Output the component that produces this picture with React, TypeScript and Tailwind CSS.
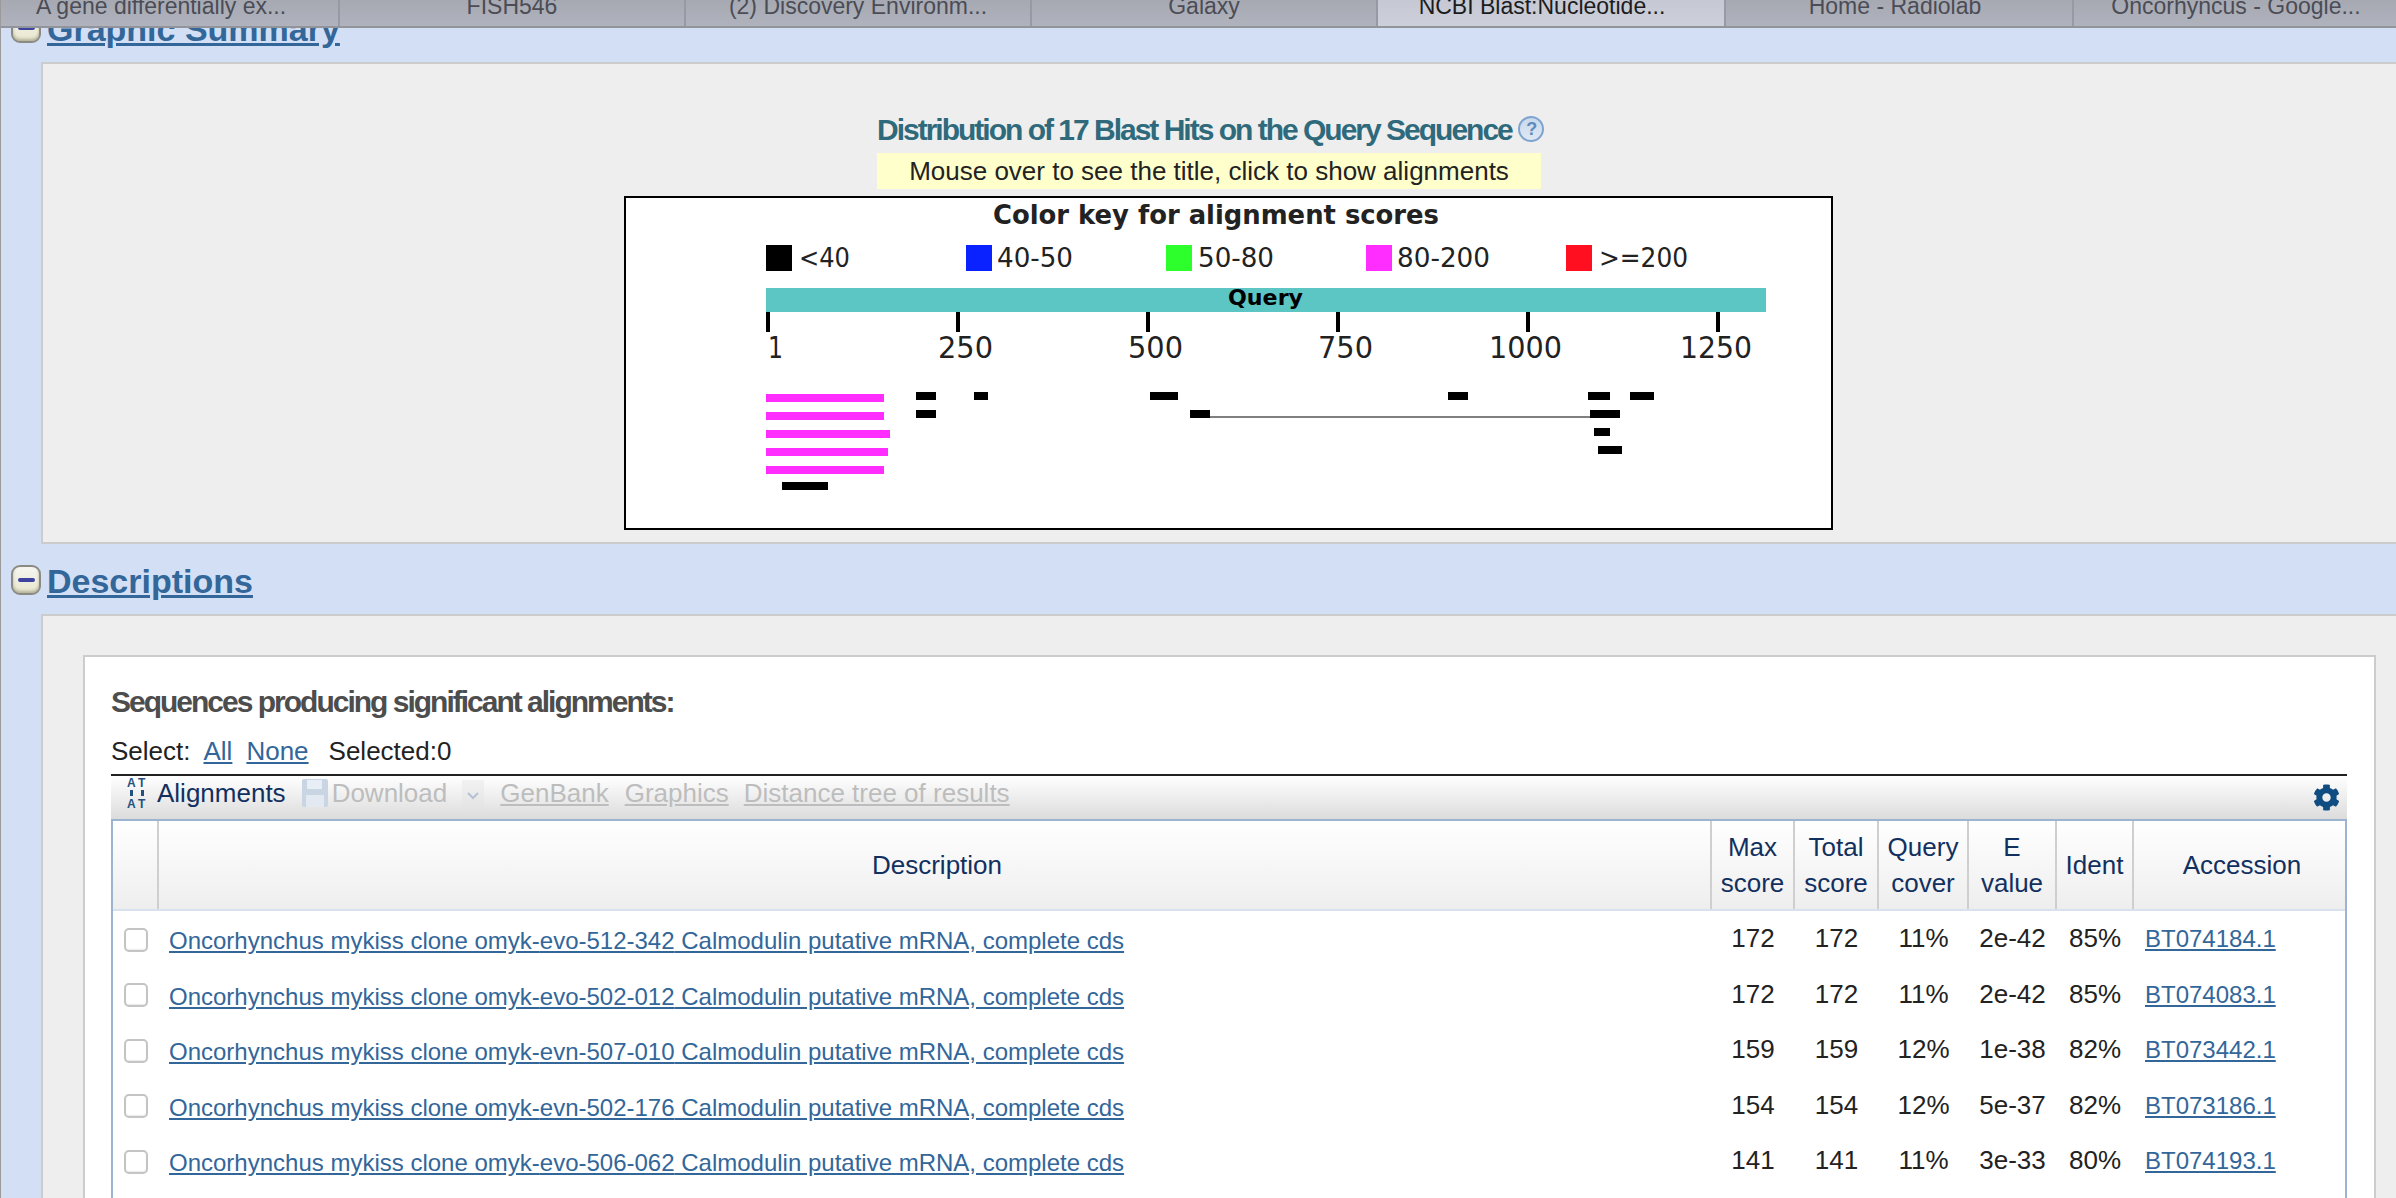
import { FaCog } from "react-icons/fa";

const tabs = [
  { label: "A gene differentially ex...", width: "w-[356px]", text: "" },
  { label: "FISH546", width: "w-[346px]", text: "" },
  { label: "(2) Discovery Environm...", width: "w-[346px]", text: "" },
  { label: "Galaxy", width: "w-[346px]", text: "" },
  { label: "NCBI Blast:Nucleotide...", width: "w-[348px]", text: "pr-[18px]", active: true },
  { label: "Home - Radiolab", width: "w-[348px]", text: "pr-[8px]" },
  { label: "Oncorhyncus - Google...", width: "w-[334px]", text: "pr-[8px]" },
];

const rows = [
  { clone: "evo-512-342", score: "172", cover: "11%", e: "2e-42", ident: "85%", acc: "BT074184.1" },
  { clone: "evo-502-012", score: "172", cover: "11%", e: "2e-42", ident: "85%", acc: "BT074083.1" },
  { clone: "evn-507-010", score: "159", cover: "12%", e: "1e-38", ident: "82%", acc: "BT073442.1" },
  { clone: "evn-502-176", score: "154", cover: "12%", e: "5e-37", ident: "82%", acc: "BT073186.1" },
  { clone: "evo-506-062", score: "141", cover: "11%", e: "3e-33", ident: "80%", acc: "BT074193.1" },
];

const columns = "grid grid-cols-[44px_1553px_83px_84px_90px_88px_77px_1fr]";

const legend = [
  { x: 766, w: 26, fill: "#000000", label: "<40", tx: 799, tw: 51 },
  { x: 966, w: 26, fill: "#0a22ff", label: "40-50", tx: 997, tw: 76 },
  { x: 1166, w: 26, fill: "#2dff2d", label: "50-80", tx: 1198, tw: 76 },
  { x: 1366, w: 26, fill: "#ff2dff", label: "80-200", tx: 1397, tw: 93 },
  { x: 1566, w: 26, fill: "#ff0f1f", label: ">=200", tx: 1599, tw: 89 },
];

const ticks = [
  { x: 766, label: "1", tx: 768, tw: 15 },
  { x: 956, label: "250", tx: 938, tw: 55 },
  { x: 1146, label: "500", tx: 1128, tw: 55 },
  { x: 1336, label: "750", tx: 1318, tw: 55 },
  { x: 1526, label: "1000", tx: 1489, tw: 73 },
  { x: 1716, label: "1250", tx: 1680, tw: 72 },
];

// x1, x2, y of each hit on the graphic
const magentaHits = [
  [766, 884, 394],
  [766, 884, 412],
  [766, 890, 430],
  [766, 888, 448],
  [766, 884, 466],
];
const blackHits = [
  [782, 828, 482],
  [916, 936, 392],
  [916, 936, 410],
  [974, 988, 392],
  [1150, 1178, 392],
  [1190, 1210, 410],
  [1448, 1468, 392],
  [1588, 1610, 392],
  [1630, 1654, 392],
  [1590, 1620, 410],
  [1594, 1610, 428],
  [1598, 1622, 446],
];

const chartFont = "'DejaVu Sans', sans-serif";

function HitsChart() {
  return (
    <svg viewBox="626 198 1205 330" className="block w-[1205px] h-[330px]">
      <text x={993} y={224} fontFamily={chartFont} fontWeight="700" fontSize={26} fill="#222" textLength={446} lengthAdjust="spacingAndGlyphs">
        Color key for alignment scores
      </text>
      {legend.map((item) => (
        <g key={item.label}>
          <rect x={item.x} y={245} width={item.w} height={26} fill={item.fill} />
          <text x={item.tx} y={267} fontFamily={chartFont} fontSize={27} fill="#222" textLength={item.tw} lengthAdjust="spacingAndGlyphs">
            {item.label}
          </text>
        </g>
      ))}
      <rect x={766} y={288} width={1000} height={24} fill="#5cc6c4" />
      <text x={1228} y={305} fontFamily={chartFont} fontWeight="700" fontSize={21} fill="#000" textLength={75} lengthAdjust="spacingAndGlyphs">
        Query
      </text>
      {ticks.map((tick) => (
        <g key={tick.label}>
          <rect x={tick.x} y={312} width={4} height={20} fill="#000" />
          <text x={tick.tx} y={358} fontFamily={chartFont} fontSize={30} fill="#222" textLength={tick.tw} lengthAdjust="spacingAndGlyphs">
            {tick.label}
          </text>
        </g>
      ))}
      {magentaHits.map(([x1, x2, y]) => (
        <rect key={y} x={x1} y={y} width={x2 - x1} height={8} fill="#ff2dff" />
      ))}
      <rect x={1210} y={416} width={380} height={2} fill="#808080" />
      {blackHits.map(([x1, x2, y]) => (
        <rect key={`${x1}-${y}`} x={x1} y={y} width={x2 - x1} height={8} fill="#000" />
      ))}
    </svg>
  );
}

function ToggleIcon() {
  return (
    <span className="flex items-center justify-center w-[30px] h-[30px] shrink-0 rounded-[9px] border-2 border-[#8b8b84] bg-gradient-to-b from-[#f6f6f2] to-[#e8e6cc] shadow-[inset_0_-2px_3px_rgba(110,110,90,0.45)]">
      <span className="block w-[17px] h-[4px] rounded-sm bg-[#3f43a0]" />
    </span>
  );
}

function SectionHeader({ title }: { title: string }) {
  return (
    <div className="flex items-center gap-[6px] h-[30px] pl-[10px] mt-[21px] mb-[19px]">
      <ToggleIcon />
      <a href="#" className="mt-[2px] text-[34px] leading-[30px] font-bold text-[#336699] underline whitespace-nowrap">
        {title}
      </a>
    </div>
  );
}

function HelpIcon() {
  return (
    <span className="flex items-center justify-center w-[26px] h-[26px] rounded-full border-2 border-[#7fa3d0] bg-gradient-to-b from-[#c9d9ec] to-[#dfe8f3] text-[18px] leading-none font-bold text-[#5f8bc0]">
      ?
    </span>
  );
}

function AlignIcon() {
  return (
    <svg width="20" height="30" viewBox="0 0 20 30" className="shrink-0">
      <g fill="#24527f" fontFamily="'Liberation Sans', sans-serif" fontWeight="700" fontSize="12">
        <text x="0" y="9">A</text>
        <text x="11" y="9">T</text>
        <rect x="3" y="12" width="3" height="6" />
        <rect x="14" y="12" width="3" height="6" />
        <text x="0" y="30">A</text>
        <text x="11" y="30">T</text>
      </g>
    </svg>
  );
}

function FloppyIcon() {
  return (
    <svg width="26" height="28" viewBox="0 0 26 28" className="block shrink-0">
      <rect width="26" height="28" rx="2" fill="#c9d5e2" />
      <rect x="5" y="1" width="15" height="9" fill="#e8eef5" />
      <rect x="4" y="16" width="18" height="12" fill="#e3e9f0" />
    </svg>
  );
}

function ResultRow({ row }: { row: (typeof rows)[number] }) {
  return (
    <div className={`${columns} h-[55.5px] items-center text-[26px] leading-[30px] text-[#222]`}>
      <span className="ml-[11px] mt-[2px] w-[24px] h-[24px] rounded-[5px] border-2 border-[#c4c4c4] bg-white shadow-[inset_0_-1px_1px_rgba(0,0,0,0.08)]" />
      <a href="#" className="ml-[12px] mt-[5px] text-[24px] leading-[28px] text-[#336699] underline whitespace-nowrap">
        Oncorhynchus mykiss clone omyk-{row.clone} Calmodulin putative mRNA, complete cds
      </a>
      <span className="text-center ml-[3px] -mt-[1px]">{row.score}</span>
      <span className="text-center ml-[3px] -mt-[1px]">{row.score}</span>
      <span className="text-center ml-[3px] -mt-[1px]">{row.cover}</span>
      <span className="text-center ml-[3px] -mt-[1px]">{row.e}</span>
      <span className="text-center ml-[3px] -mt-[1px]">{row.ident}</span>
      <a href="#" className="ml-[13px] mt-[1px] text-[24px] leading-[28px] text-[#336699] underline">
        {row.acc}
      </a>
    </div>
  );
}

function HeaderCell({ children, first, shift }: { children?: React.ReactNode; first?: boolean; shift?: boolean }) {
  return (
    <div className={`flex items-center justify-center text-center ${first ? "" : "border-l-2 border-[#cfcfcf]"} ${shift ? "pl-[5px]" : ""}`}>
      <span>{children}</span>
    </div>
  );
}

export default function App() {
  return (
    <div className="w-[2396px] h-[1198px] overflow-hidden border-l border-[#9a9a9a] bg-[#d2dff5] font-['Liberation_Sans',Arial,sans-serif]">
      {/* Browser tabs */}
      <div className="relative z-10 flex h-[28px] -ml-[17px] overflow-hidden border-b-2 border-[#92949c] bg-gradient-to-b from-[#a6a9b2] to-[#b0b3bd]">
        {tabs.map((tab) => (
          <div
            key={tab.label}
            className={`flex items-end justify-center shrink-0 h-[26px] border-r-2 border-[#989aa3] text-[23px] leading-[26px] whitespace-nowrap ${tab.width} ${tab.text} ${tab.active ? "bg-gradient-to-b from-[#c6c8d3] to-[#cdd0da] text-[#1c1c20]" : "text-[#4b4c55]"}`}
          >
            <span className="-translate-y-[7px]">{tab.label}</span>
          </div>
        ))}
      </div>

      <div className="-mt-[36px]">
        <SectionHeader title="Graphic Summary" />
      </div>

      {/* Graphic summary panel */}
      <div className="ml-[40px] h-[482px] border-2 border-r-0 border-[#cccccc] bg-[#eeeeee] pl-[581px] pt-[47px]">
        <div className="ml-[253px] flex items-center gap-[6px] h-[36px] text-[30px] font-bold tracking-[-2px] text-[#2f6a7c] whitespace-nowrap">
          Distribution of 17 Blast Hits on the Query Sequence
          <HelpIcon />
        </div>
        <div className="ml-[253px] mt-[6px] w-[664px] h-[36px] bg-[#ffffcc] text-center text-[26px] leading-[36px] text-[#222]">
          Mouse over to see the title, click to show alignments
        </div>
        <div className="mt-[7px] w-[1209px] border-2 border-black bg-white">
          <HitsChart />
        </div>
      </div>

      <SectionHeader title="Descriptions" />

      {/* Descriptions panel */}
      <div className="ml-[40px] border-2 border-r-0 border-[#cccccc] bg-[#eeeeee] pl-[40px] pr-[20px] pt-[39px]">
        <div className="border-2 border-[#cccccc] bg-white pl-[26px] pr-[27px] pt-[27px] pb-[60px]">
          <h3 className="text-[30px] leading-[36px] font-bold tracking-[-2px] text-[#4d4d4d]">
            Sequences producing significant alignments:
          </h3>
          <div className="flex items-center h-[30px] mt-[16px] text-[26px] leading-[30px] text-[#222]">
            <span>Select:</span>
            <a href="#" className="ml-[13px] text-[#336699] underline">All</a>
            <a href="#" className="ml-[14px] text-[#336699] underline">None</a>
            <span className="ml-[20px]">Selected:0</span>
          </div>

          {/* Toolbar */}
          <div className="flex items-center h-[45px] mt-[8px] pl-[16px] pr-[7px] pb-[10px] border-t-2 border-[#222] bg-gradient-to-b from-[#ffffff] to-[#dcdcdc] text-[26px] leading-[30px]">
            <AlignIcon />
            <span className="ml-[10px] text-[#12305f]">Alignments</span>
            <span className="ml-[16px]"><FloppyIcon /></span>
            <span className="ml-[4px] text-[#bdbdbd]">Download</span>
            <span className="ml-[15px] flex items-center justify-center w-[22px] h-[32px] mt-[6px] bg-gradient-to-b from-[#f2f2f2] to-[#e2e2e2] text-[#b4c3d4]">
              <svg width="12" height="8" viewBox="0 0 12 8" fill="none" stroke="currentColor" strokeWidth="2">
                <path d="M1 1l5 5 5-5" />
              </svg>
            </span>
            <a href="#" className="ml-[16px] text-[#bdbdbd] underline">GenBank</a>
            <a href="#" className="ml-[16px] text-[#bdbdbd] underline">Graphics</a>
            <a href="#" className="ml-[15px] text-[#bdbdbd] underline">Distance tree of results</a>
            <FaCog className="ml-auto translate-y-[5px] text-[27px] text-[#0f4c81]" />
          </div>

          {/* Results table, runs on past the bottom of the window */}
          <div className="border-2 border-[#9db4d0] pb-[60px]">
            <div className={`${columns} h-[90px] border-b-2 border-[#d8e2ee] bg-gradient-to-b from-[#ffffff] to-[#eeeeee] text-[26px] leading-[36px] text-[#12305f]`}>
              <HeaderCell first />
              <HeaderCell shift>Description</HeaderCell>
              <HeaderCell>Max<br />score</HeaderCell>
              <HeaderCell>Total<br />score</HeaderCell>
              <HeaderCell>Query<br />cover</HeaderCell>
              <HeaderCell>E<br />value</HeaderCell>
              <HeaderCell>Ident</HeaderCell>
              <HeaderCell shift>Accession</HeaderCell>
            </div>
            {rows.map((row) => (
              <ResultRow key={row.acc} row={row} />
            ))}
          </div>
        </div>
      </div>
    </div>
  );
}
